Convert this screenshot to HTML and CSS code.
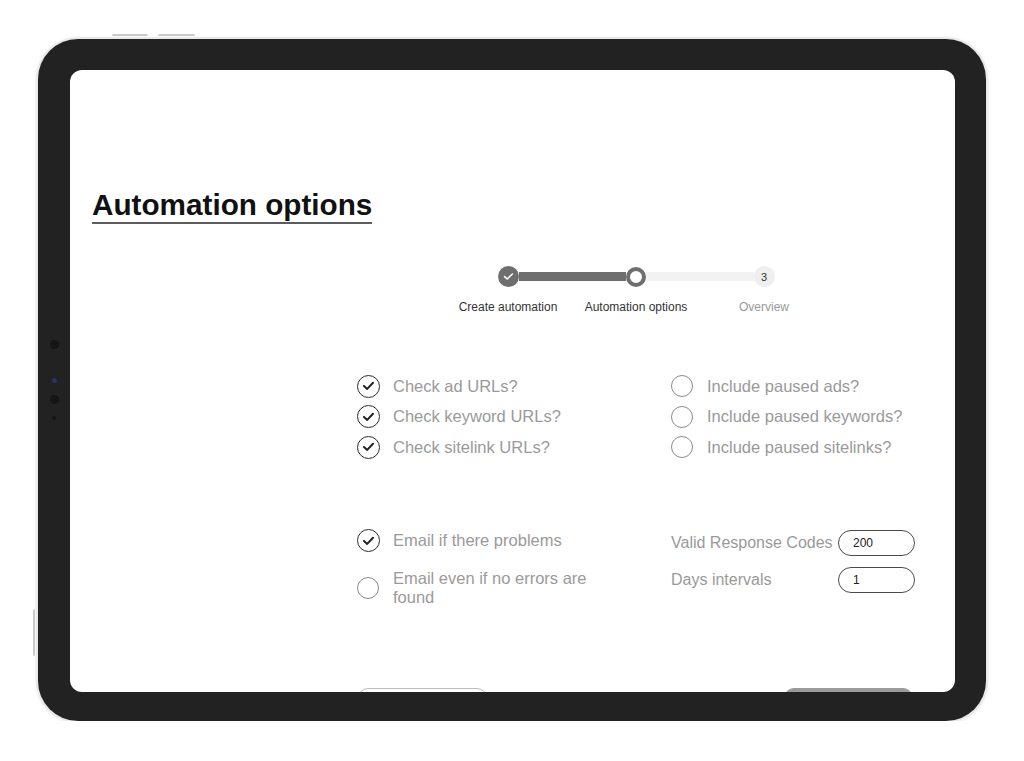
FILE: index.html
```html
<!DOCTYPE html>
<html lang="en">
<head>
    <meta charset="UTF-8">
    <meta name="viewport" content="width=device-width, initial-scale=1.0">
    <title>Automation options</title>
    <link rel="stylesheet" href="styles.css">
</head>
<body>
    <div class="device">
        <!-- кнопки и камера на корпусе -->
        <span class="hw hw-top1"></span>
        <span class="hw hw-top2"></span>
        <span class="hw hw-side"></span>
        <span class="cam cam-big cam-1"></span>
        <span class="cam cam-blue"></span>
        <span class="cam cam-big cam-2"></span>
        <span class="cam cam-small"></span>

        <div class="screen">
            <h1 class="title">Automation options</h1>

            <div class="main">
                <div class="steps">
                    <div class="steps-track">
                        <span class="dot dot-done">
                            <svg width="21" height="21" viewBox="0 0 21 21"><path d="M6.6 10.6 L9.2 13 L14.4 8" fill="none" stroke="#fff" stroke-width="1.6" stroke-linecap="round" stroke-linejoin="round"/></svg>
                        </span>
                        <span class="bar bar-done"></span>
                        <span class="dot dot-current"></span>
                        <span class="bar bar-next"></span>
                        <span class="dot dot-next">3</span>
                    </div>
                    <div class="steps-labels">
                        <div>Create automation</div>
                        <div>Automation options</div>
                        <div class="muted">Overview</div>
                    </div>
                </div>

                <div class="options">
                    <div class="col">
                        <label class="opt"><span class="box checked"><svg width="23" height="23" viewBox="0 0 23 23"><path d="M7 11.9 L10.2 14.9 L16 8.7" fill="none" stroke="#222" stroke-width="2" stroke-linecap="round" stroke-linejoin="round"/></svg></span>Check ad URLs?</label>
                        <label class="opt"><span class="box checked"><svg width="23" height="23" viewBox="0 0 23 23"><path d="M7 11.9 L10.2 14.9 L16 8.7" fill="none" stroke="#222" stroke-width="2" stroke-linecap="round" stroke-linejoin="round"/></svg></span>Check keyword URLs?</label>
                        <label class="opt"><span class="box checked"><svg width="23" height="23" viewBox="0 0 23 23"><path d="M7 11.9 L10.2 14.9 L16 8.7" fill="none" stroke="#222" stroke-width="2" stroke-linecap="round" stroke-linejoin="round"/></svg></span>Check sitelink URLs?</label>
                    </div>
                    <div class="col">
                        <label class="opt"><span class="box"></span>Include paused ads?</label>
                        <label class="opt"><span class="box"></span>Include paused keywords?</label>
                        <label class="opt"><span class="box"></span>Include paused sitelinks?</label>
                    </div>
                </div>

                <div class="options notify">
                    <div class="col">
                        <label class="opt"><span class="box checked"><svg width="23" height="23" viewBox="0 0 23 23"><path d="M7 11.9 L10.2 14.9 L16 8.7" fill="none" stroke="#222" stroke-width="2" stroke-linecap="round" stroke-linejoin="round"/></svg></span>Email if there problems</label>
                        <label class="opt opt-wrap"><span class="box"></span><span class="opt-text">Email even if no errors are found</span></label>
                    </div>
                    <div class="col fields">
                        <div class="field">
                            <span class="field-label">Valid Response Codes</span>
                            <input type="text" class="pill" value="200">
                        </div>
                        <div class="field">
                            <span class="field-label">Days intervals</span>
                            <input type="text" class="pill" value="1">
                        </div>
                    </div>
                </div>

                <div class="actions">
                    <button class="btn btn-back" aria-label="Back"></button>
                    <button class="btn btn-next" aria-label="Next"></button>
                </div>
            </div>
        </div>
    </div>
</body>
</html>
```
FILE: styles.css
```css
body {
    margin: 0;
    background-color: #fff;
    font-family: "Liberation Sans", Arial, Helvetica, sans-serif;
}

.device {
    position: relative;
    box-sizing: border-box;
    width: 948px;
    height: 682px;
    margin: 39px 0 0 38px;
    padding: 31px 31px 29px 32px;
    background-color: #222;
    border-radius: 40px;
    box-shadow: 0 0 0 2px #e9e9e9, 0 1px 5px rgba(0, 0, 0, 0.2);
}

/* кнопки корпуса */
.hw {
    position: absolute;
    background-color: #c9c9c9;
}
.hw-top1 {
    left: 74px;
    top: -5px;
    width: 36px;
    height: 2px;
    border-radius: 2px 2px 0 0;
}
.hw-top2 {
    left: 120px;
    top: -5px;
    width: 37px;
    height: 2px;
    border-radius: 2px 2px 0 0;
}
.hw-side {
    left: -5px;
    top: 570px;
    width: 2px;
    height: 47px;
    border-radius: 2px 0 0 2px;
}

.cam {
    position: absolute;
    border-radius: 50%;
    background-color: #151515;
}
.cam-big {
    left: 11.5px;
    width: 9px;
    height: 9px;
}
.cam-1 {
    top: 300.5px;
}
.cam-2 {
    top: 355.5px;
}
.cam-blue {
    left: 13.5px;
    top: 338.5px;
    width: 5px;
    height: 5px;
    background-color: #2d2f6e;
}
.cam-small {
    left: 14px;
    top: 377px;
    width: 4px;
    height: 4px;
}

.screen {
    height: 100%;
    box-sizing: border-box;
    padding: 118px 22px 0 22px;
    background-color: #fff;
    border-radius: 12px;
    overflow: hidden;
}

.title {
    display: inline-block;
    margin: 0;
    font-size: 29.7px;
    font-weight: 700;
    line-height: normal;
    color: #111;
    border-bottom: 2px solid #5c5c5c;
}

.main {
    width: 558px;
    margin-left: 265px;
}

/* шаги мастера */
.steps {
    width: 384px;
    margin: 42px auto 0;
}
.steps-track {
    display: flex;
    align-items: center;
    padding: 0 53.5px;
}
.dot {
    flex: none;
    box-sizing: border-box;
    width: 21px;
    height: 21px;
    border-radius: 50%;
}
.dot svg {
    display: block;
}
.dot-done {
    background-color: #6e6e6e;
}
.dot-current {
    width: 20px;
    height: 20px;
    background-color: #fff;
    border: 4px solid #6e6e6e;
}
.dot-next {
    display: flex;
    justify-content: center;
    align-items: center;
    background-color: #efefef;
    font-size: 11px;
    color: #333;
}
.bar {
    flex: 1;
    height: 9px;
}
.bar-done {
    background-color: #6e6e6e;
}
.bar-next {
    background-color: #f2f2f2;
}
.steps-labels {
    display: grid;
    grid-template-columns: repeat(3, 1fr);
    margin-top: 13px;
    font-size: 12px;
    line-height: 14px;
    text-align: center;
    color: #333;
}
.muted {
    color: #999;
}

/* чекбоксы */
.options {
    display: grid;
    grid-template-columns: 314px 244px;
    margin-top: 57px;
}
.col {
    display: flex;
    flex-direction: column;
}
.opt {
    display: flex;
    align-items: center;
    gap: 13px;
    height: 30.5px;
    font-size: 16.5px;
    color: #9a9a9a;
    cursor: pointer;
}
.box {
    flex: none;
    box-sizing: border-box;
    width: 22px;
    height: 22px;
    border-radius: 50%;
    border: 1px solid #8c8c8c;
}
.box.checked {
    width: 23px;
    height: 23px;
    border: 1.5px solid #2b2b2b;
}
.box svg {
    display: block;
    margin: -1.5px;
}
.opt-wrap {
    height: auto;
    margin-top: 13px;
    line-height: 19px;
}
.opt-wrap .box {
    margin-right: 1px;
}
.opt-text {
    max-width: 215px;
}
.col + .col .opt {
    gap: 14px;
}

.notify {
    margin-top: 63px;
}
.fields {
    padding-top: 4px;
}
.field {
    display: flex;
    align-items: center;
    height: 26px;
    font-size: 16px;
    color: #9a9a9a;
}
.field + .field {
    margin-top: 11px;
}
.field-label {
    width: 167px;
    flex: none;
    white-space: nowrap;
}
.pill {
    box-sizing: border-box;
    width: 77px;
    height: 26px;
    padding: 0 0 0 14px;
    border: 1px solid #4a4a4a;
    border-radius: 13px;
    font-family: inherit;
    font-size: 12px;
    color: #222;
    outline: none;
}

.actions {
    display: flex;
    justify-content: space-between;
    margin: 81px 2px 0 1px;
}
.btn {
    width: 129px;
    height: 38px;
    border-radius: 10px;
    cursor: pointer;
}
.btn-back {
    background-color: #fff;
    border: 1px solid #bbb;
}
.btn-next {
    background-color: #9a9a9a;
    border: 1px solid #9a9a9a;
}
```
